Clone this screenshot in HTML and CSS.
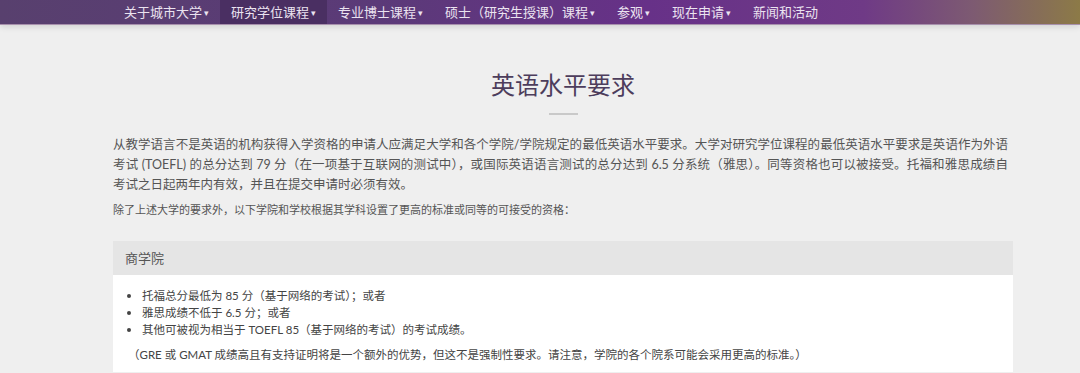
FILE: index.html
```html
<!DOCTYPE html>
<html lang="zh-CN">
<head>
  <meta charset="UTF-8" />
  <meta name="viewport" content="width=device-width, initial-scale=1.0"/>
  <title>英语水平要求</title>
  <link rel="stylesheet" href="styles.css">
</head>
<body>
  <nav class="topnav">
    <ul class="nav-list">
      <li class="nav-item">关于城市大学<span class="caret">▾</span></li>
      <li class="nav-item active">研究学位课程<span class="caret">▾</span></li>
      <li class="nav-item">专业博士课程<span class="caret">▾</span></li>
      <li class="nav-item">硕士（研究生授课）课程<span class="caret">▾</span></li>
      <li class="nav-item">参观<span class="caret">▾</span></li>
      <li class="nav-item">现在申请<span class="caret">▾</span></li>
      <li class="nav-item">新闻和活动</li>
    </ul>
  </nav>

  <main class="page">
    <h1 class="page-title">英语水平要求</h1>
    <div class="title-rule"></div>

    <p class="intro">从教学语言不是英语的机构获得入学资格的申请人应满足大学和各个学院/学院规定的最低英语水平要求。大学对研究学位课程的最低英语水平要求是英语作为外语考试 (TOEFL) 的总分达到 79 分（在一项基于互联网的测试中），或国际英语语言测试的总分达到 6.5 分系统（雅思）。同等资格也可以被接受。托福和雅思成绩自考试之日起两年内有效，并且在提交申请时必须有效。</p>
    <p class="note-small">除了上述大学的要求外，以下学院和学校根据其学科设置了更高的标准或同等的可接受的资格：</p>

    <section class="card">
      <div class="card-head">商学院</div>
      <div class="card-body">
        <ul class="req-list">
          <li>托福总分最低为 85 分（基于网络的考试）；或者</li>
          <li>雅思成绩不低于 6.5 分；或者</li>
          <li>其他可被视为相当于 TOEFL 85（基于网络的考试）的考试成绩。</li>
        </ul>
        <p class="card-note">（GRE 或 GMAT 成绩高且有支持证明将是一个额外的优势，但这不是强制性要求。请注意，学院的各个院系可能会采用更高的标准。）</p>
      </div>
    </section>
  </main>
</body>
</html>
```

FILE: styles.css
```css
* {
  box-sizing: border-box;
}
body {
  margin: 0;
  background: #efefef;
  color: #555;
  font-family: Lato, "Noto Sans CJK SC", sans-serif;
  overflow: hidden;
}
.topnav {
  height: 25px;
  background: linear-gradient(to right, #58406e 0%, #5b3a78 35%, #673188 60%, #6f3a86 80%, #7d5a72 90%, #8c7a47 100%);
  border-bottom: 1px solid #a891ad;
  box-shadow: 0 2px 6px rgba(0,0,0,0.12);
}
.nav-list {
  list-style: none;
  margin: 0;
  padding: 0 0 0 113px;
  display: flex;
  height: 24px;
}
.nav-item {
  padding: 0 11px;
  line-height: 24px;
  font-size: 13px;
  color: #ebe3f0;
  white-space: nowrap;
}
.nav-item.active {
  background: #4a2f62;
}
.caret {
  font-size: 9px;
  margin-left: 2px;
  vertical-align: 1px;
}
.page {
  width: 900px;
  margin-left: 113px;
}
.page-title {
  margin: 44px 0 0;
  text-align: center;
  font-size: 24px;
  line-height: 32px;
  font-weight: 400;
  color: #4d3d5c;
}
.title-rule {
  width: 29px;
  height: 2px;
  background: #c9c9c9;
  margin: 12px auto 0;
}
.intro {
  margin: 20px 0 0;
  padding-right: 5px;
  font-size: 12.5px;
  line-height: 20px;
  text-align: justify;
}
.note-small {
  margin: 6px 0 0;
  font-size: 11px;
  line-height: 18px;
}
.card {
  margin-top: 22px;
  background: #fff;
}
.card-head {
  height: 34px;
  line-height: 34px;
  padding-left: 12px;
  background: #e5e5e5;
  font-size: 13px;
}
.card-body {
  padding: 12px 15px 9px;
}
.req-list {
  margin: 0;
  padding-left: 14px;
  font-size: 11.5px;
  line-height: 16px;
  color: #444;
}
.req-list li::marker {
  font-size: 13px;
}
.card-note {
  margin: 9px 0 0;
  font-size: 11.5px;
  line-height: 16px;
  color: #444;
}
```
